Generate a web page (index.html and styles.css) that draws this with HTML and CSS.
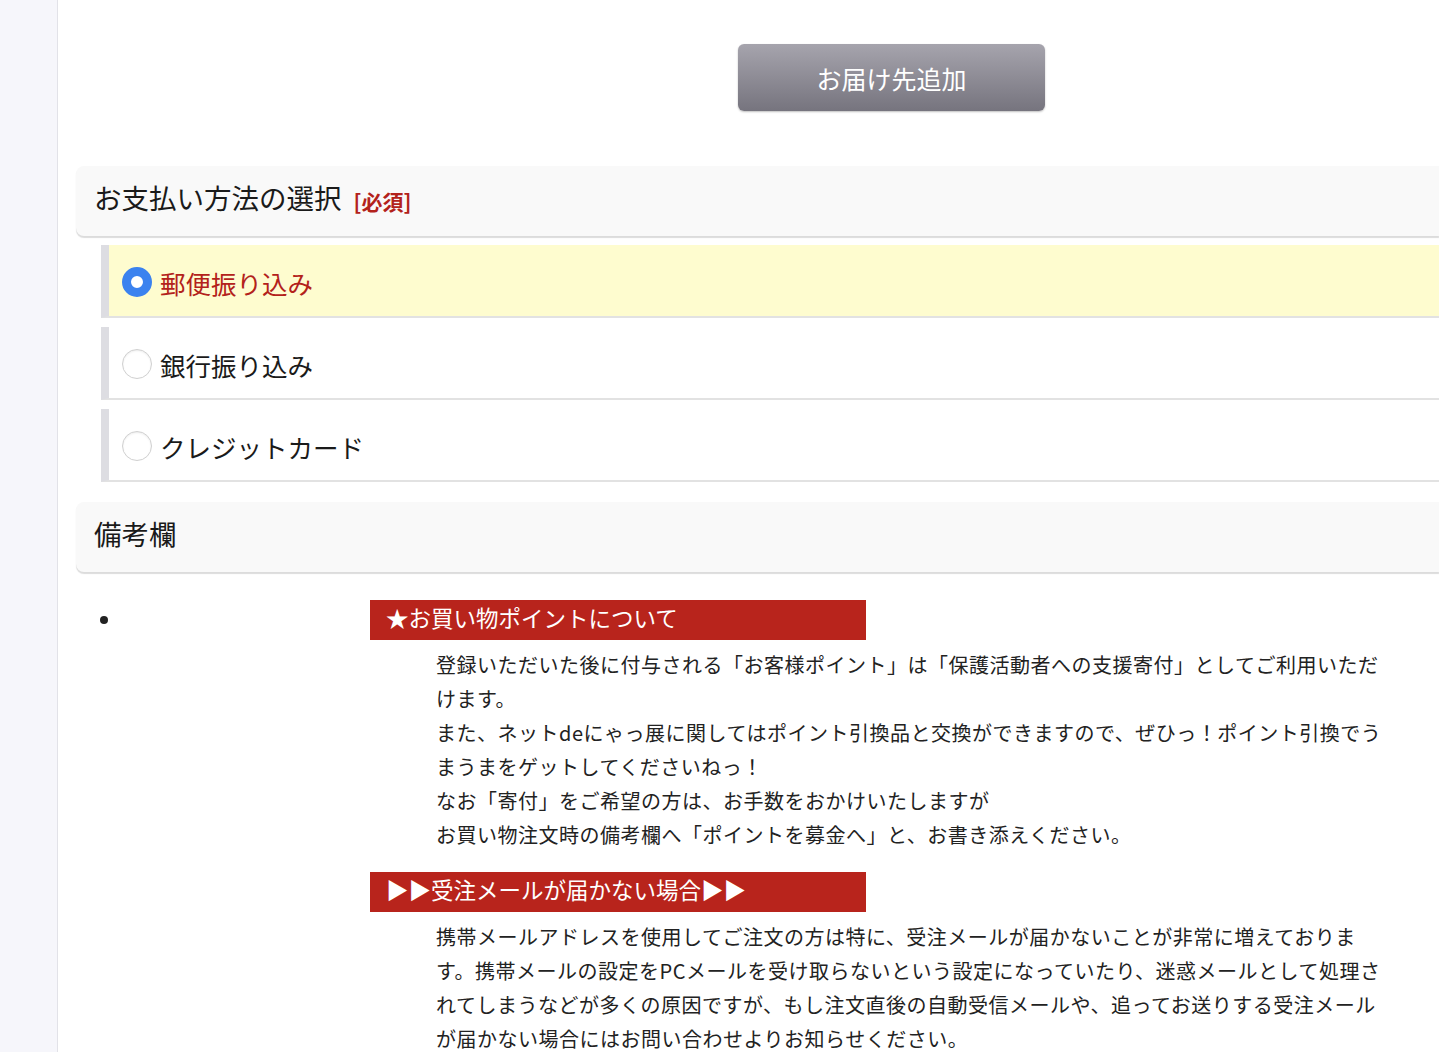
FILE: index.html
```html
<!doctype html>
<html lang="ja">
<head>
    <meta charset="UTF-8">
    <meta name="viewport" content="width=device-width, initial-scale=1.0">
    <title>お支払い方法の選択</title>
    <link rel="stylesheet" href="styles.css">
</head>
<body>
<div class="page">
    <div class="side"></div>
    <div class="main">
        <div class="btn-wrap">
            <button class="btn-add" type="button">お届け先追加</button>
        </div>

        <div class="sec-head">お支払い方法の選択<span class="req">[必須]</span></div>
        <ul class="pay-list">
            <li class="pay-item on"><span class="radio"></span>郵便振り込み</li>
            <li class="pay-item"><span class="radio"></span>銀行振り込み</li>
            <li class="pay-item"><span class="radio"></span>クレジットカード</li>
        </ul>

        <div class="sec-head">備考欄</div>
        <ul class="note">
            <li>
                <div class="note-box">
                    <div class="note-title">★お買い物ポイントについて</div>
                    <p class="note-text">登録いただいた後に付与される「お客様ポイント」は「保護活動者への支援寄付」としてご利用いただけます。<br>
                        また、ネットdeにゃっ展に関してはポイント引換品と交換ができますので、ぜひっ！ポイント引換でうまうまをゲットしてくださいねっ！<br>
                        なお「寄付」をご希望の方は、お手数をおかけいたしますが<br>
                        お買い物注文時の備考欄へ「ポイントを募金へ」と、お書き添えください。</p>
                    <div class="note-title">▶▶受注メールが届かない場合▶▶</div>
                    <p class="note-text">携帯メールアドレスを使用してご注文の方は特に、受注メールが届かないことが非常に増えております。携帯メールの設定をPCメールを受け取らないという設定になっていたり、迷惑メールとして処理されてしまうなどが多くの原因ですが、もし注文直後の自動受信メールや、追ってお送りする受注メールが届かない場合にはお問い合わせよりお知らせください。</p>
                </div>
            </li>
        </ul>
    </div>
</div>
</body>
</html>
```

FILE: styles.css
```css
*{margin: 0;padding: 0;box-sizing: border-box}
html,body{height: 100%;overflow: hidden;background: #fff}
body{font-family: "Hiragino Kaku Gothic ProN", "Noto Sans CJK JP", "Noto Sans", sans-serif;color: #222}
.page{display: flex;min-height: 100%;width: 100%}
.side{width: 58px;flex: none;background: #f6f6fb;border-right: 1px solid #e2e2e8}
.main{flex: 1;min-width: 0;padding-left: 18px}

.btn-wrap{padding: 44px 0 55px 662px}
.btn-add{
    width: 307px;
    height: 67px;
    border: 0;
    border-radius: 6px;
    background: linear-gradient(#a6a4ad, #76747e);
    box-shadow: 0 1px 2px rgba(0,0,0,.25);
    color: #fff;
    font-family: inherit;
    font-size: 25px;
}

.sec-head{
    height: 70px;
    padding: 12px 0 0 18px;
    background: #f9f9f9;
    border-radius: 8px 0 0 8px;
    box-shadow: 0 2px 1px #dcdcdc;
    font-size: 27.5px;
    line-height: 38px;
    color: #1a1a1a;
}
.req{margin-left: 12px;color: #b3221b;font-size: 21px;font-weight: bold;vertical-align: -1px}

.pay-list{list-style: none;padding: 9px 0 20px 25px}
.pay-item{
    display: flex;
    align-items: center;
    height: 73px;
    margin-bottom: 9px;
    padding: 3px 0 0 13px;
    border-left: 8px solid #dddde2;
    border-bottom: 2px solid #e2e2e2;
    font-size: 25.5px;
    color: #1a1a1a;
}
.pay-item:last-child{margin-bottom: 0}
.pay-item.on{background: #fefccf;color: #b3221b}
.radio{
    width: 30px;
    height: 30px;
    margin-right: 8px;
    border-radius: 50%;
    border: 1px solid #d0d0d0;
    background: #fff;
    box-shadow: inset 0 1px 2px rgba(0,0,0,.08);
}
.on .radio{border: 9px solid #3b82ef;box-shadow: none}

.note{padding: 28px 0 0 46px}
.note li{font-size: 20px}
.note-box{margin-left: 248px;width: 1010px}
.note-title{
    width: 496px;
    height: 40px;
    padding-left: 16px;
    background: #b8241c;
    color: #fff;
    font-size: 22.5px;
    line-height: 35px;
}
.note-text{
    width: 946px;
    margin: 8px 0 20px 66px;
    font-size: 20px;
    letter-spacing: .5px;
    line-height: 34px;
    color: #222;
}
```
